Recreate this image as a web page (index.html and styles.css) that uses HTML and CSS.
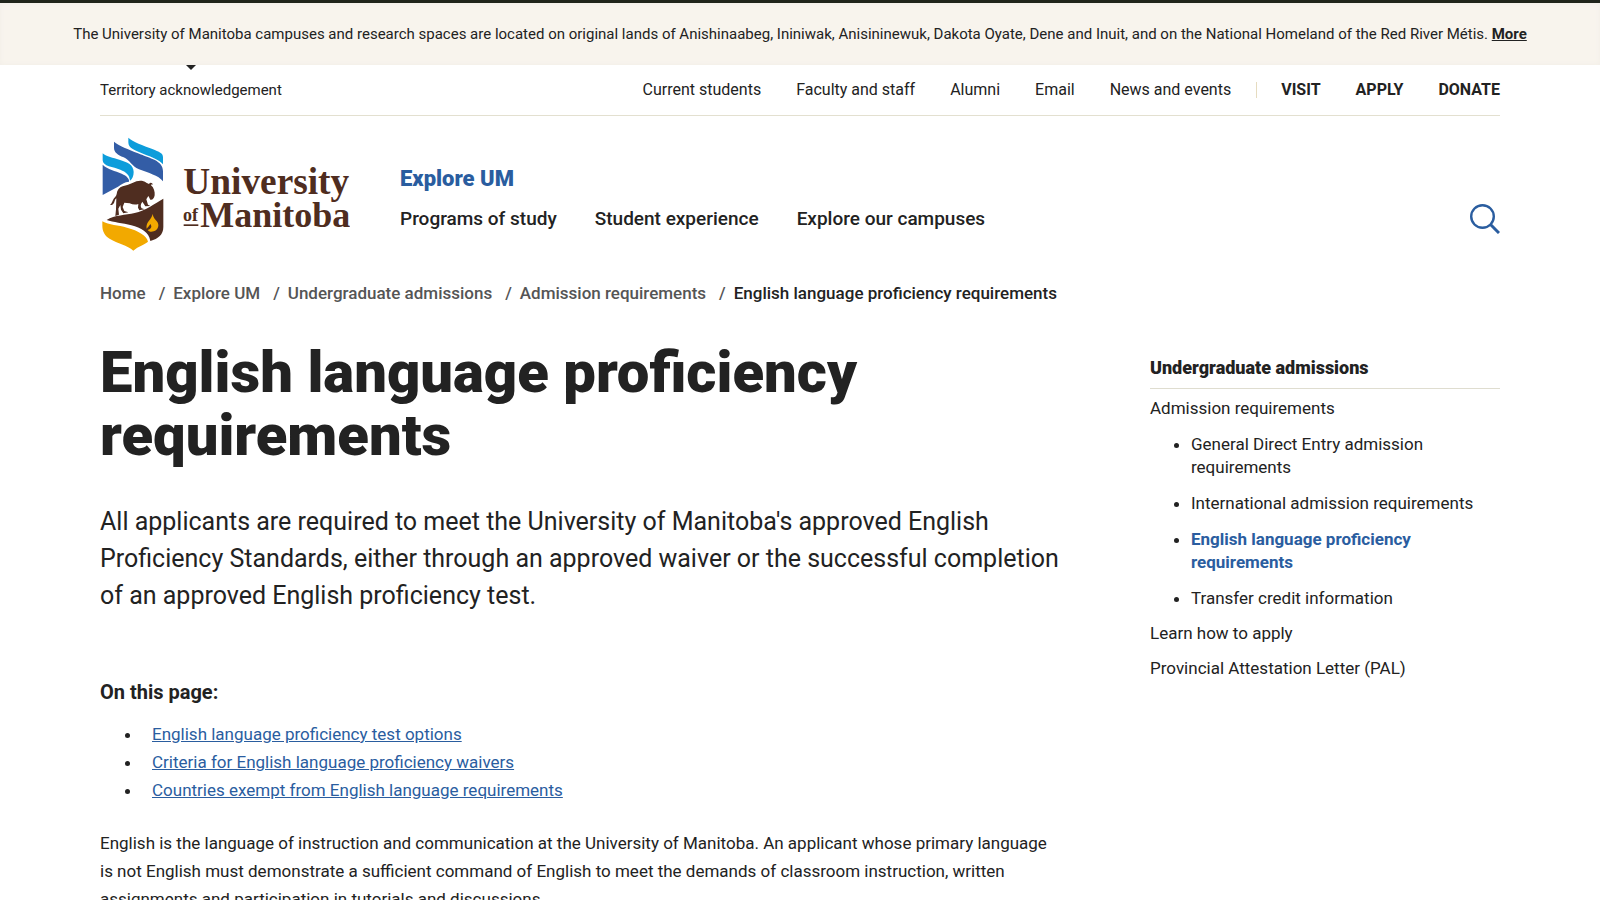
FILE: index.html
```html
<!DOCTYPE html>
<html lang="en">

<head>
    <meta charset="UTF-8">
    <meta name="viewport" content="width=device-width, initial-scale=1.0">
    <title>English language proficiency requirements | University of Manitoba</title>
    <link rel="stylesheet" href="styles.css">
</head>

<body>
    <div class="notice">
        <p>The University of Manitoba campuses and research spaces are located on original lands of Anishinaabeg, Ininiwak, Anisininewuk, Dakota Oyate, Dene and Inuit, and on the National Homeland of the Red River Métis. <a href="#">More</a></p>
    </div>
    <header class="container">
        <div class="topbar">
            <a class="territory" href="#">Territory acknowledgement</a>
            <nav class="utility" aria-label="Utility">
                <ul class="links">
                    <li><a href="#">Current students</a></li>
                    <li><a href="#">Faculty and staff</a></li>
                    <li><a href="#">Alumni</a></li>
                    <li><a href="#">Email</a></li>
                    <li><a href="#">News and events</a></li>
                </ul>
                <ul class="links actions">
                    <li><a href="#">VISIT</a></li>
                    <li><a href="#">APPLY</a></li>
                    <li><a href="#">DONATE</a></li>
                </ul>
            </nav>
        </div>
        <div class="masthead">
            <a class="logo" href="#" aria-label="University of Manitoba">
                <svg width="250" height="120" viewBox="30 30 750 360">
                    <!-- sky -->
                    <path fill="#0d9ddb" d="M115 38C128 51 160 61 187 72C208 81 219 84 219 97V118C208 104 186 97 161 87C132 76 115 69 115 52Z" />
                    <path fill="#335da6" d="M72 50C86 63 116 73 144 85C180 101 219 106 219 139V169C205 151 175 144 147 133C124 123 121 106 101 97C83 89 72 82 72 68Z" />
                    <path fill="#0d9ddb" d="M38 85C50 96 69 98 88 104C112 111 131 119 131 141C131 153 127 162 120 167C119 149 108 141 91 134C70 126 38 124 38 106Z" />
                    <path fill="#335da6" d="M38 119C53 134 76 137 95 146C111 153 119 162 117 170C104 171 94 177 84 185L38 210Z" />
                    <!-- bison -->
                    <path fill="#4f2d20" d="M60 240C67 236 67 226 72 220C76 215 79 212 80 207C81 195 88 187 98 184C110 180 119 178 129 173C141 166 158 164 169 173L177 177C180 171 187 172 189 180C187 177 184 177 183 181C192 188 195 201 194 211C192 221 187 226 181 224C178 219 177 216 175 213L169 223L174 239L181 243L166 244L157 230C151 239 151 245 155 250L164 253L148 256L144 248L145 237C137 240 127 239 119 235L103 233L98 246L103 258L115 262L100 265L93 254L91 240L85 251L87 269L76 273L78 253L79 220C72 225 75 236 66 240Z" />
                    <!-- land, flame and field -->
                    <path fill="#4f2d20" d="M50 285C74 270 107 270 134 264C166 257 197 234 220 221V306C220 329 205 341 181 348C177 321 153 309 124 301C98 294 70 292 50 285Z" />
                    <path fill="#f2a900" d="M188 259C187 271 190 278 199 287C211 299 204 315 191 319C183 322 177 320 173 315C184 312 187 305 181 297C178 303 174 306 170 311C168 296 175 291 181 282C186 275 189 270 188 259Z" />
                    <path fill="#f2a900" d="M37 289C57 300 85 301 111 308C145 317 171 332 174 350C164 359 145 363 130 377C112 361 82 355 60 342C44 333 37 318 37 302Z" />
                    <g class="wordmark">
                        <text x="280" y="208" font-size="112">University</text>
                        <text x="331" y="306" font-size="108">Manitoba</text>
                        <text x="279" y="288" font-size="54">of</text>
                        <rect x="281" y="298" width="44" height="5" />
                    </g>
                </svg>
            </a>
            <nav class="mainnav" aria-label="Main">
                <a class="section" href="#">Explore UM</a>
                <ul>
                    <li><a href="#">Programs of study</a></li>
                    <li><a href="#">Student experience</a></li>
                    <li><a href="#">Explore our campuses</a></li>
                </ul>
            </nav>
            <button class="search" type="button" aria-label="Search">
                <svg width="30" height="30" viewBox="0 0 30 30" fill="none" stroke="#2a5d9f" stroke-width="2.4">
                    <circle cx="12.5" cy="12.5" r="11.3" />
                    <path d="M20.5 20.5L29 29" stroke-width="3" />
                </svg>
            </button>
        </div>
    </header>
    <div class="container">
        <nav class="breadcrumb" aria-label="Breadcrumb">
            <ol>
                <li><a href="#">Home</a></li>
                <li><a href="#">Explore UM</a></li>
                <li><a href="#">Undergraduate admissions</a></li>
                <li><a href="#">Admission requirements</a></li>
                <li aria-current="page">English language proficiency requirements</li>
            </ol>
        </nav>
        <div class="columns">
            <main>
                <h1>English language proficiency requirements</h1>
                <p class="lead">All applicants are required to meet the University of Manitoba's approved English Proficiency Standards, either through an approved waiver or the successful completion of an approved English proficiency test.</p>
                <h2>On this page:</h2>
                <ul class="anchors">
                    <li><a href="#">English language proficiency test options</a></li>
                    <li><a href="#">Criteria for English language proficiency waivers</a></li>
                    <li><a href="#">Countries exempt from English language requirements</a></li>
                </ul>
                <p>English is the language of instruction and communication at the University of Manitoba. An applicant whose primary language is not English must demonstrate a sufficient command of English to meet the demands of classroom instruction, written assignments and participation in tutorials and discussions.</p>
            </main>
            <aside>
                <h2>Undergraduate admissions</h2>
                <ul class="sidenav">
                    <li>
                        <a href="#">Admission requirements</a>
                        <ul>
                            <li><a href="#">General Direct Entry admission requirements</a></li>
                            <li><a href="#">International admission requirements</a></li>
                            <li><a class="current" href="#">English language proficiency requirements</a></li>
                            <li><a href="#">Transfer credit information</a></li>
                        </ul>
                    </li>
                    <li><a href="#">Learn how to apply</a></li>
                    <li><a href="#">Provincial Attestation Letter (PAL)</a></li>
                </ul>
            </aside>
        </div>
    </div>
</body>

</html>
```

FILE: styles.css
```css
* {
    padding: 0;
    margin: 0;
    box-sizing: border-box;
}

html {
    scrollbar-width: none;
}

body {
    font-family: Roboto, "Liberation Sans", sans-serif;
    font-size: 17px;
    line-height: 28px;
    color: #222;
    background: #fff;
}

a {
    color: inherit;
    text-decoration: none;
}

ul,
ol {
    list-style: none;
}

.container {
    padding: 0 100px;
}

.notice {
    position: relative;
    padding: 17px 20px;
    border-top: 3px solid #20251b;
    background: #f8f4ed;
    box-shadow: inset 0 0 5px #f1eee8;
    font-size: 15px;
    text-align: center;
}

.notice::after {
    content: "";
    position: absolute;
    top: 100%;
    left: 186px;
    border: 5px solid transparent;
    border-top-color: #222;
    border-bottom: none;
}

.notice a {
    font-weight: 700;
    text-decoration: underline;
}

.topbar {
    display: flex;
    justify-content: space-between;
    align-items: center;
    padding: 11px 0;
    border-bottom: 1px solid #e3e0d0;
}

.territory {
    font-size: 15px;
}

.utility {
    display: flex;
    align-items: center;
    gap: 25px;
    font-size: 16px;
}

.links {
    display: flex;
    gap: 35px;
}

.actions {
    padding-left: 24px;
    border-left: 1px solid #e6dcc0;
    line-height: 16px;
    font-weight: 700;
}

.masthead {
    display: flex;
    align-items: center;
    gap: 50px;
    padding: 19px 0 24px;
}

.logo svg {
    display: block;
}

.wordmark {
    font-family: "Liberation Serif", serif;
    font-weight: 700;
    fill: #4f2d20;
}

.mainnav {
    flex: 1;
    padding-top: 7px;
    font-size: 19px;
    font-weight: 500;
}

.mainnav ul {
    display: flex;
    gap: 38px;
    padding-top: 12px;
}

.section {
    display: block;
    color: #2a5d9f;
    font-size: 22px;
    font-weight: 900;
}

.search {
    align-self: flex-end;
    margin-bottom: 21px;
    border: none;
    background: none;
    cursor: pointer;
}

.search svg {
    display: block;
}

.breadcrumb ol {
    display: flex;
    flex-wrap: wrap;
    color: #222;
    font-weight: 500;
}

.breadcrumb li + li::before {
    content: "/";
    padding: 0 8px 0 13px;
    color: #555;
}

.breadcrumb a {
    color: #555;
}

.columns {
    display: grid;
    grid-template-columns: 3fr 1fr;
    padding-top: 34px;
}

main {
    padding-right: 88px;
}

h1 {
    font-size: 58px;
    line-height: 63px;
    font-weight: 900;
}

.lead {
    padding: 36px 0 64px;
    font-size: 25px;
    line-height: 37px;
}

main h2 {
    font-size: 20px;
    font-weight: 700;
}

.anchors {
    padding: 14px 0 25px 42px;
    list-style: disc;
}

.anchors li {
    padding-left: 10px;
}

.anchors a {
    color: #2a5d9f;
    text-decoration: underline;
}

aside {
    padding-top: 14px;
    line-height: 23px;
}

aside h2 {
    padding-bottom: 7px;
    border-bottom: 1px solid #dfddd0;
    font-size: 18px;
    line-height: 26px;
    font-weight: 900;
}

.sidenav {
    padding-top: 8px;
}

.sidenav li {
    padding-bottom: 12px;
}

.sidenav ul {
    padding: 13px 0 0 41px;
    list-style: disc;
}

.sidenav li li {
    padding-bottom: 13px;
}

.sidenav li li:last-child {
    padding-bottom: 0;
}

.current {
    color: #2a5d9f;
    font-weight: 700;
}
```
